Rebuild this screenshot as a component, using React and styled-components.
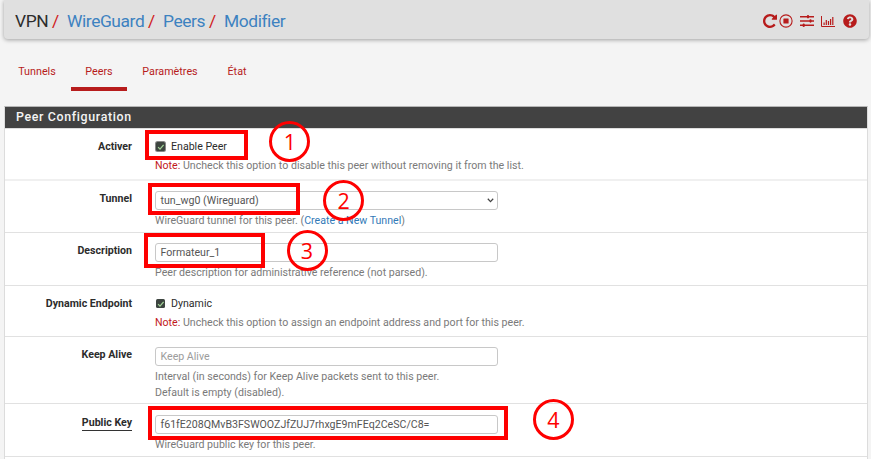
import React from "react";
import styled, { createGlobalStyle } from "styled-components";
import { FaQuestionCircle } from "react-icons/fa";

const GlobalStyle = createGlobalStyle`
  * { box-sizing: border-box; }
  html, body { margin: 0; padding: 0; background: #f4f4f4; overflow: hidden; }
  body { font-family: Roboto, "Liberation Sans", sans-serif; font-size: 10.62px; color: #2c2c2c; }
`;

const Page = styled.div`
  position: relative;
  width: 871px;
  height: 459px;
  overflow: hidden;
  background: #f4f4f4;
`;

const Header = styled.header`
  display: flex;
  align-items: center;
  justify-content: space-between;
  height: 39px;
  width: 865px;
  margin-left: 4px;
  padding: 3px 12px 0 11px;
  background: #e0e0e0;
  border-radius: 0 0 4px 4px;
  box-shadow: 0 1px 4px rgba(0, 0, 0, 0.35);
`;

const Breadcrumb = styled.nav`
  display: flex;
  font-size: 17.4px;
  letter-spacing: -0.42px;
  line-height: 20px;
  white-space: nowrap;
`;

const Crumb = styled.span`
  width: ${(p) => p.$w}px;
  color: ${(p) => (p.$link ? "#3d82c0" : "#2c2c2c")};
`;

const Slash = styled.span`
  width: ${(p) => p.$w}px;
  color: #d02020;
`;

const Actions = styled.div`
  display: flex;
  align-items: center;
  color: #b71c1c;
  svg { display: block; }
`;

const ActionIcon = styled.span`
  display: flex;
  justify-content: center;
  margin-left: ${(p) => p.$gap || 0}px;
`;

const Tabs = styled.nav`
  display: flex;
  height: 67px;
  padding: 20px 0 0 4px;
  font-size: 10.75px;
`;

const Tab = styled.a`
  width: ${(p) => p.$w}px;
  height: 32px;
  line-height: 26px;
  margin-right: 1px;
  text-align: center;
  color: #b71c1c;
  border-bottom: 4px solid ${(p) => (p.$active ? "#b71c1c" : "transparent")};
`;

const Panel = styled.section`
  width: 864px;
  margin-left: 4px;
  border: 1px solid #dcdcdc;
  border-top-color: #b5b5b5;
  background: #fff;
`;

const PanelTitle = styled.h2`
  height: 22px;
  margin: 0;
  padding-left: 11px;
  background: #424242;
  border-bottom: 1px solid #ddd;
  color: #f4f4f4;
  font-size: 12.4px;
  line-height: 20px;
  font-weight: 500;
  letter-spacing: 0.65px;
`;

const Row = styled.div`
  display: grid;
  grid-template-columns: 127px 1fr;
  column-gap: 23px;
  height: ${(p) => p.$h}px;
  padding-top: ${(p) => p.$pt || 10}px;
  border-bottom: ${(p) => p.$line || 1}px solid ${(p) => (p.$line ? "#f0f0f0" : "#e1e1e1")};
`;

const Label = styled.div`
  text-align: right;
  font-weight: 700;
  line-height: 15px;
  span { display: inline-block; line-height: 14px; border-bottom: ${(p) => (p.$required ? "1px solid #333" : "0")}; }
`;

const Field = styled.div`
  display: flex;
  flex-direction: column;
  align-items: flex-start;
`;

const Control = styled.div`
  display: flex;
  align-items: center;
  justify-content: space-between;
  width: 343px;
  height: 19px;
  padding: 0 3px 0 4.5px;
  border: 1px solid #c8c8c8;
  border-radius: 3px;
  background: #fff;
  color: ${(p) => (p.$empty ? "#9c9c9c" : "#555")};
  white-space: nowrap;
`;

const CheckLine = styled.label`
  display: flex;
  align-items: center;
  gap: 6px;
  height: 15px;
`;

const Box = styled.span`
  display: flex;
  width: 9.5px;
  height: 9.5px;
  margin-left: 0.5px;
  background: #3d4540;
  border-radius: 1.5px;
  box-shadow: ${(p) => (p.$focus ? "0 0 0 1px #8a8a8a" : "none")};
`;

const Help = styled.div`
  margin-top: ${(p) => p.$mt || 3}px;
  line-height: 15.6px;
  color: #7a7a7a;
  white-space: nowrap;
  b { font-weight: 400; color: #c2181c; }
  a { color: #337ab7; }
`;

const Frame = styled.div`
  position: absolute;
  left: ${(p) => p.$x}px;
  top: ${(p) => p.$y}px;
  width: ${(p) => p.$w}px;
  height: ${(p) => p.$h}px;
  border: 4px solid #fe0000;
`;

const Badge = styled.div`
  position: absolute;
  left: ${(p) => p.$x}px;
  top: ${(p) => p.$y}px;
  width: 41px;
  height: 41px;
  border: 3px solid #fe0000;
  border-radius: 50%;
  color: #fe0000;
  font: 21.5px/35px "Open Sans", sans-serif;
  text-align: center;
`;

const Repeat = () => (
  <svg width="14" height="14" viewBox="128 128 1536 1536" fill="currentColor">
    <path d="M1664 256v448q0 26-19 45t-45 19h-448q-42 0-59-40-17-39 14-69l138-138q-148-137-349-137-104 0-198.5 40.5t-163.5 109.5-109.5 163.5-40.5 198.5 40.5 198.5 109.5 163.5 163.5 109.5 198.5 40.5q119 0 225-52t179-147q7-10 23-12 15 0 25 9l137 138q9 8 9.5 20.5t-7.5 22.5q-109 132-264 204.5t-327 72.5q-156 0-298-61t-245-164-164-245-61-298 61-298 164-245 245-164 298-61q147 0 284.5 55.5t244.5 156.5l130-129q29-31 70-14 39 17 39 59z" />
  </svg>
);

const StopCircle = () => (
  <svg width="14" height="14" viewBox="0 0 14 14">
    <circle cx="7" cy="7" r="6.1" fill="none" stroke="currentColor" strokeWidth="1.1" />
    <rect x="4.4" y="4.4" width="5.2" height="5.2" rx="0.5" fill="currentColor" />
  </svg>
);

const Sliders = () => (
  <svg width="14" height="14" viewBox="0 0 14 14" stroke="currentColor" fill="none">
    <path strokeWidth="1.5" d="M0 2.7H14M0 7H14M0 11.3H14" />
    <path strokeWidth="2.2" strokeLinecap="round" d="M8 2.1V3.3M10.5 6.4V7.6M3.7 10.7V11.9" />
  </svg>
);

const BarChart = () => (
  <svg width="14" height="11" viewBox="0 0 14 11" fill="none" stroke="currentColor">
    <path strokeWidth="1" d="M.5 0V10.5H14" />
    <path strokeWidth="1.2" d="M3.1 9V6.5M5.3 9V4M7.5 9V5M9.6 9V3M11.8 9V1" />
  </svg>
);

const Checkbox = ({ focus }) => (
  <Box $focus={focus}>
    <svg width="10" height="10" viewBox="0 0 10 10">
      <path d="M2.2 5.2 4.2 7.3 8 2.8" fill="none" stroke="#a5d69a" strokeWidth="1.3" />
    </svg>
  </Box>
);

export default function App() {
  return (
    <Page>
      <GlobalStyle />
      <Header>
        <Breadcrumb>
          <Crumb $w={37}>VPN</Crumb>
          <Slash $w={15}>/</Slash>
          <Crumb $w={81} $link>WireGuard</Crumb>
          <Slash $w={15}>/</Slash>
          <Crumb $w={46} $link>Peers</Crumb>
          <Slash $w={15}>/</Slash>
          <Crumb $w={70} $link>Modifier</Crumb>
        </Breadcrumb>
        <Actions>
          <ActionIcon><Repeat /></ActionIcon>
          <ActionIcon $gap={2}><StopCircle /></ActionIcon>
          <ActionIcon $gap={7}><Sliders /></ActionIcon>
          <ActionIcon $gap={7}><BarChart /></ActionIcon>
          <ActionIcon $gap={8}><FaQuestionCircle size={14} /></ActionIcon>
        </Actions>
      </Header>

      <Tabs>
        <Tab $w={66}>Tunnels</Tab>
        <Tab $w={56} $active>Peers</Tab>
        <Tab $w={84}>Paramètres</Tab>
        <Tab $w={48}>État</Tab>
      </Tabs>

      <Panel>
        <PanelTitle>Peer Configuration</PanelTitle>
        <Row $h={52} $line={2}>
          <Label><span>Activer</span></Label>
          <Field>
            <CheckLine><Checkbox focus />Enable Peer</CheckLine>
            <Help $mt={4}><b>Note:</b> Uncheck this option to disable this peer without removing it from the list.</Help>
          </Field>
        </Row>
        <Row $h={52}>
          <Label><span>Tunnel</span></Label>
          <Field>
            <Control>
              tun_wg0 (Wireguard)
              <svg width="7" height="5" viewBox="0 0 7 5"><path d="M.8.8 3.5 3.6 6.2.8" fill="none" stroke="#444" strokeWidth="1.3" /></svg>
            </Control>
            <Help>WireGuard tunnel for this peer. (<a>Create a New Tunnel</a>)</Help>
          </Field>
        </Row>
        <Row $h={53}>
          <Label><span>Description</span></Label>
          <Field>
            <Control>Formateur_1</Control>
            <Help>Peer description for administrative reference (not parsed).</Help>
          </Field>
        </Row>
        <Row $h={51}>
          <Label><span>Dynamic Endpoint</span></Label>
          <Field>
            <CheckLine><Checkbox />Dynamic</CheckLine>
            <Help $mt={4}><b>Note:</b> Uncheck this option to assign an endpoint address and port for this peer.</Help>
          </Field>
        </Row>
        <Row $h={67}>
          <Label><span>Keep Alive</span></Label>
          <Field>
            <Control $empty>Keep Alive</Control>
            <Help>Interval (in seconds) for Keep Alive packets sent to this peer.<br />Default is empty (disabled).</Help>
          </Field>
        </Row>
        <Row $h={53} $pt={11}>
          <Label $required><span>Public Key</span></Label>
          <Field>
            <Control>f61fE208QMvB3FSWOOZJfZUJ7rhxgE9mFEq2CeSC/C8=</Control>
            <Help>WireGuard public key for this peer.</Help>
          </Field>
        </Row>
        <Row $h={20} />
      </Panel>

      <Frame $x={145} $y={130} $w={103} $h={30} />
      <Frame $x={148} $y={183} $w={152} $h={32} />
      <Frame $x={144} $y={233} $w={121} $h={35} />
      <Frame $x={148} $y={406} $w={360} $h={34} />
      <Badge $x={269.3} $y={120.5}>1</Badge>
      <Badge $x={323.2} $y={179.7}>2</Badge>
      <Badge $x={286.5} $y={229.8}>3</Badge>
      <Badge $x={532.8} $y={399}>4</Badge>
    </Page>
  );
}
